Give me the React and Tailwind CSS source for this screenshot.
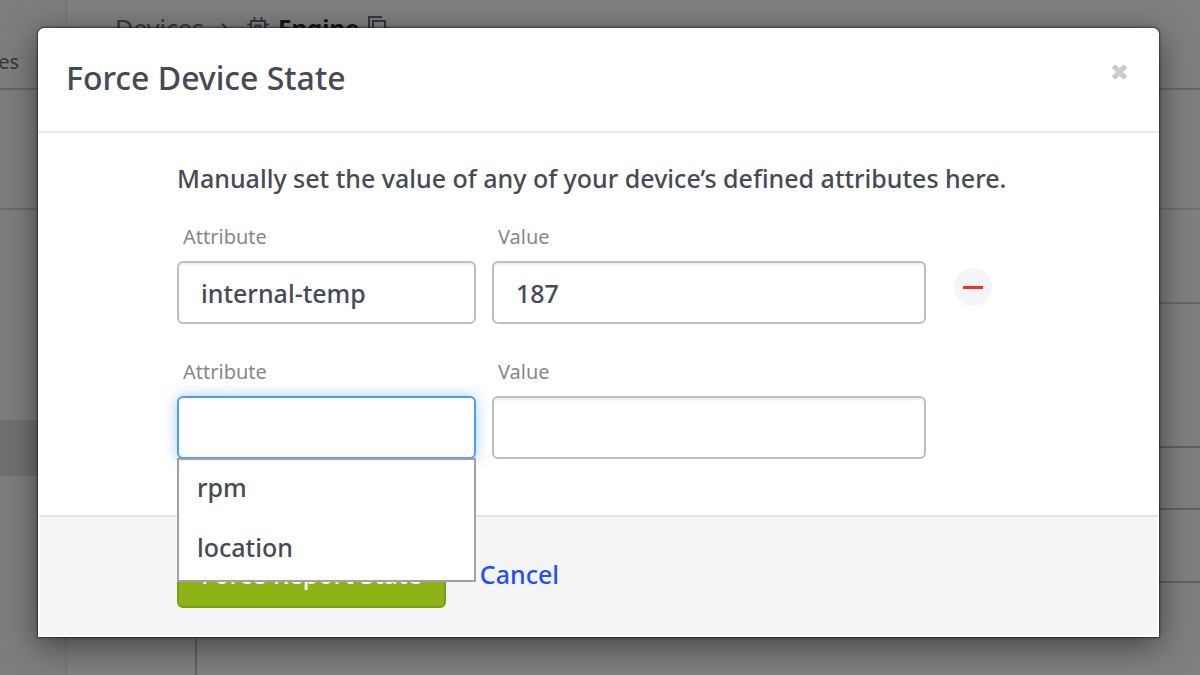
import { useState } from "react";
import { ChevronRight } from "lucide-react";

const menuRows = [
  { id: "nav-devices", label: "Devices", className: "h-[90px] border-b-2 border-[#cbccd0] pt-[46px]" },
  { id: "nav-search", label: "", className: "h-[120px] border-b-2 border-[#d6d7da]" },
  { id: "nav-group", label: "", className: "h-[210px]" },
  { id: "nav-active", label: "", className: "h-14 bg-[#e0e1e4]" },
];

const pageRows = [
  { id: "tabs", className: "h-[120px] border-b-2 border-[#dfe0e3]" },
  { id: "summary", className: "h-[94px] border-b-2 border-[#cbccd0]" },
  { id: "chart", className: "h-[144px] border-b-2 border-[#c2c3c7]" },
  { id: "table-head", className: "h-[62px] border-b-2 border-[#c2c3c7]" },
  { id: "table-row", className: "h-[73px] border-b-2 border-[#c2c3c7]" },
];

const suggestions = ["rpm", "location"];

const inputClassName =
  "block h-[63px] w-full rounded-md border-2 border-[#bfbfbf] bg-white px-[22px] text-[25px] font-medium text-[#454a54] shadow-[inset_0_2px_2px_rgba(0,0,0,0.07)] outline-none focus:border-[#4f9cf5] focus:shadow-[0_0_14px_rgba(79,156,245,0.5)]";

function ChipIcon() {
  return (
    <svg width="24" height="24" viewBox="0 0 24 24" fill="none" stroke="currentColor" strokeWidth="2">
      <path d="M5 5h14v14H5zM9.500 9.500h5v5h-5z" />
      <path d="M8.500 1v4M15.500 1v4M8.500 19v4M15.500 19v4M1 8.500h4M1 15.500h4M19 8.500h4M19 15.500h4" />
    </svg>
  );
}

function CopyIcon() {
  return (
    <svg width="20" height="24" viewBox="0 0 20 24" fill="none" stroke="currentColor" strokeWidth="2">
      <path d="M6 5h12v18H6z" />
      <path d="M2 18V1h13" />
    </svg>
  );
}

/**
 * Device page that sits behind the modal.
 */
function DevicePage() {
  return (
    <div className="flex min-h-screen bg-white text-[#667086]">
      <nav className="w-[67px] shrink-0 overflow-hidden border-r-2 border-[#eeeef0] bg-[#fbfbfb]">
        {menuRows.map((row) => (
          <div key={row.id} className={`flex justify-end pr-[46px] text-xl ${row.className}`}>
            {row.label ? <span className="leading-8">{row.label}</span> : null}
          </div>
        ))}
      </nav>
      <main className="flex min-w-0 flex-1 flex-col">
        <div className="flex h-[90px] items-start border-b-2 border-[#cbccd0] pt-3 pl-12 text-[25px] leading-8">
          <a href="#devices">Devices</a>
          <span className="px-3 pt-2">
            <ChevronRight size={18} strokeWidth={3} />
          </span>
          <span className="flex items-start gap-2">
            <span className="pt-1">
              <ChipIcon />
            </span>
            <strong className="text-2xl font-bold text-[#2c2f38]">Engine</strong>
            <span className="pt-1">
              <CopyIcon />
            </span>
          </span>
        </div>
        {pageRows.map((row) => (
          <div key={row.id} className={row.className} />
        ))}
        <div className="ml-32 flex-1 border-l-2 border-[#c2c3c7]" />
      </main>
    </div>
  );
}

function Field({ id, label, children, ...inputProps }) {
  return (
    <div className="relative">
      <label htmlFor={id} className="block pb-2 pl-1.5 text-xl leading-8 text-[#85888e]">
        {label}
      </label>
      <input id={id} type="text" autoComplete="off" className={inputClassName} {...inputProps} />
      {children}
    </div>
  );
}

export default function App() {
  const [attribute, setAttribute] = useState("");

  return (
    <div className="relative min-h-screen overflow-hidden font-['Noto_Sans','Open_Sans',sans-serif]">
      <DevicePage />
      <div className="absolute inset-0 bg-black/50 pt-7 pr-[41px] pl-[38px]">
        <section
          role="dialog"
          aria-labelledby="modal-title"
          className="rounded-t-md bg-white text-[#454a54] shadow-[0_0_2px_1px_rgba(0,0,0,0.5),0_8px_32px_rgba(0,0,0,0.5)]"
        >
          <header className="flex items-start justify-between border-b-2 border-[#e7e8e9] pt-7 pr-[29px] pb-[31px] pl-7">
            <h1 id="modal-title" className="text-[32px] leading-[44px] font-medium">
              Force Device State
            </h1>
            <button type="button" aria-label="Close" className="pt-[7px] text-[#c9cbcd]">
              <svg width="20" height="18" viewBox="0 0 20 18" fill="none">
                <path d="M3.500 3L15.500 15M15.500 3L3.500 15" stroke="currentColor" strokeWidth="5" />
              </svg>
            </button>
          </header>

          <form>
            <div className="pt-[23px] pr-[167px] pb-14 pl-[139px]">
              <p className="pb-[21px] text-[25px] leading-[44px] font-medium whitespace-nowrap">
                Manually set the value of any of your device’s defined attributes here.
              </p>
              <div className="grid grid-cols-[299fr_434fr_50px] gap-x-4 gap-y-8">
                <Field id="attribute-1" label="Attribute" defaultValue="internal-temp" />
                <Field id="value-1" label="Value" defaultValue="187" />
                <div className="flex justify-end pt-[47px]">
                  <button
                    type="button"
                    aria-label="Remove attribute"
                    className="flex size-[38px] items-center justify-center rounded-full bg-[#f4f5f7]"
                  >
                    <span className="h-[3px] w-5 bg-[#ff2d20]" />
                  </button>
                </div>
                <Field
                  id="attribute-2"
                  label="Attribute"
                  value={attribute}
                  onChange={(event) => setAttribute(event.target.value)}
                  autoFocus
                >
                  <ul className="absolute inset-x-0 top-full z-10 -mt-px border-2 border-[#a0a1a3] bg-white text-[25px] font-medium">
                    {suggestions.map((name) => (
                      <li key={name}>
                        <button
                          type="button"
                          className="block h-[60px] w-full px-[18px] pb-1 text-left"
                          onClick={() => setAttribute(name)}
                        >
                          {name}
                        </button>
                      </li>
                    ))}
                  </ul>
                </Field>
                <Field id="value-2" label="Value" />
              </div>
            </div>

            <footer className="flex items-center gap-[34px] border-2 border-white border-t-[#e2e4e6] bg-[#f4f5f7] pt-[25px] pb-[27px] pl-[137px] text-[25px] font-medium">
              <button
                type="submit"
                className="h-[66px] rounded-md border-2 border-[#7a9c12] bg-[#8db316] px-[22px] text-white"
              >
                Force Report State
              </button>
              <button type="button" className="text-[#1f4fff]">
                Cancel
              </button>
            </footer>
          </form>
        </section>
      </div>
    </div>
  );
}
